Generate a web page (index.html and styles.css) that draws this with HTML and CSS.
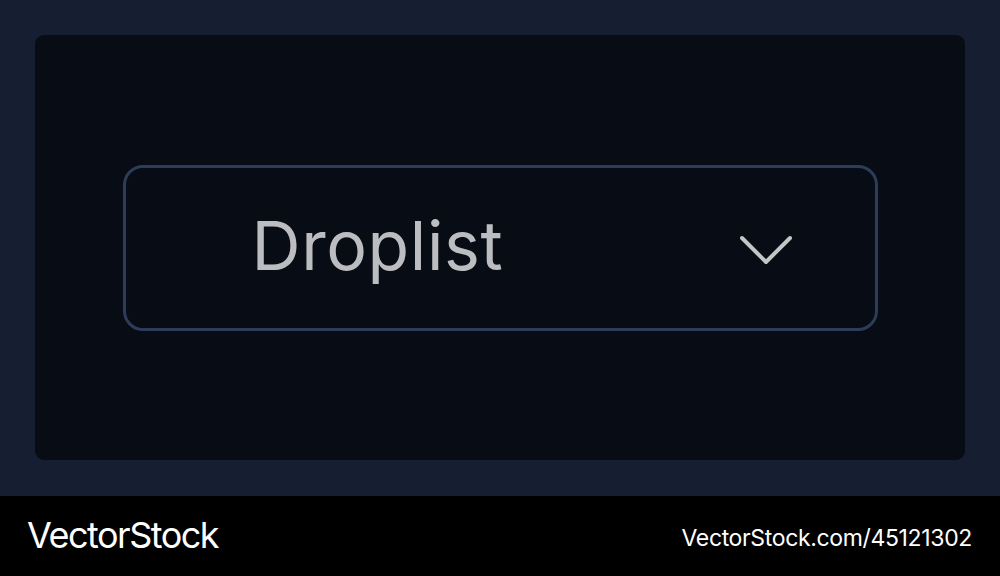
FILE: index.html
```html
<!DOCTYPE html>
<html lang="en">

<head>
    <meta charset="UTF-8">
    <meta name="viewport" content="width=device-width, initial-scale=1.0">
    <title>Droplist</title>
    <link rel="stylesheet" href="styles.css">
</head>

<body>
    <section class="stage">
        <div class="panel">
            <button class="droplist">
                <span class="droplist_label">Droplist</span>
                <svg class="droplist_arrow" width="52" height="30" viewBox="0 0 52 30">
                    <polyline points="2,3 26,27 50,3" />
                </svg>
            </button>
        </div>
    </section>

    <footer class="credit">
        <span class="brand">VectorStock</span>
        <span class="ref">VectorStock.com/45121302</span>
    </footer>
</body>

</html>
```

FILE: styles.css
```css
* {
    box-sizing: border-box;
}

body {
    margin: 0;
    width: 1000px;
    height: 576px;
    background: #000;
    font-family: "Inter", "Liberation Sans", sans-serif;
    overflow: hidden;
}

.stage {
    height: 496px;
    padding: 35px 35px 36px 35px;
    background: #161e31;
}

.panel {
    height: 100%;
    background: #080c14;
    border-radius: 9px;
    display: flex;
    align-items: center;
    justify-content: center;
}

.droplist {
    width: 755px;
    height: 166px;
    border: 3px solid #2d3c5a;
    border-radius: 20px;
    background: #080c14;
    display: flex;
    align-items: center;
    justify-content: space-between;
    padding: 0 83px 0 126px;
    cursor: pointer;
}

.droplist_label {
    font-family: "Inter", "Open Sans", sans-serif;
    font-size: 68px;
    font-weight: 400;
    letter-spacing: 0.6px;
    color: #bcbdc0;
    margin-top: -6px;
}

.droplist_arrow {
    margin-top: 4px;
}

.droplist_arrow polyline {
    fill: none;
    stroke: #c4c5c7;
    stroke-width: 4;
    stroke-linecap: round;
    stroke-linejoin: round;
}

.credit {
    height: 80px;
    display: flex;
    align-items: center;
    justify-content: space-between;
    padding: 0 28px 0 27px;
    color: #fff;
}

.brand {
    font-size: 36px;
    letter-spacing: -1.5px;
    margin-top: -2px;
}

.ref {
    font-size: 23px;
    letter-spacing: -0.35px;
    margin-top: 4px;
}
```
